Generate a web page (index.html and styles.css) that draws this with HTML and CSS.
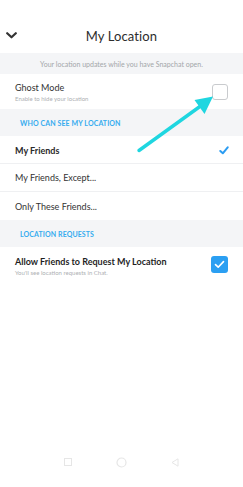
FILE: index.html
```html
<!DOCTYPE html>
<html>
<head>
<meta charset="utf-8">
<link rel="stylesheet" href="styles.css">
</head>
<body>
<div class="screen">
  <header class="header">
    <svg class="chev" width="11" height="7" viewBox="0 0 11 7"><path d="M1.2 1.2 L5.5 5.3 L9.8 1.2" fill="none" stroke="#333" stroke-width="2.2" stroke-linecap="round" stroke-linejoin="round"/></svg>
    <h1 class="title">My Location</h1>
  </header>
  <div class="info">Your location updates while you have Snapchat open.</div>
  <div class="row row-tall">
    <div class="texts">
      <div class="label">Ghost Mode</div>
      <div class="sub">Enable to hide your location</div>
    </div>
    <span class="box"></span>
  </div>
  <div class="section">WHO CAN SEE MY LOCATION</div>
  <div class="row opt first">
    <div class="label strong">My Friends</div>
    <svg class="tick" width="10" height="9" viewBox="0 0 10 9"><path d="M1.3 5 L3.8 7.3 L8.7 1.3" fill="none" stroke="#2b9cf2" stroke-width="2" stroke-linecap="round" stroke-linejoin="round"/></svg>
  </div>
  <div class="row opt">
    <div class="label">My Friends, Except...</div>
  </div>
  <div class="row opt noline">
    <div class="label">Only These Friends...</div>
  </div>
  <div class="section">LOCATION REQUESTS</div>
  <div class="row row-allow noline">
    <div class="texts">
      <div class="label bold">Allow Friends to Request My Location</div>
      <div class="sub">You'll see location requests in Chat.</div>
    </div>
    <span class="box on"><svg width="11" height="9" viewBox="0 0 11 9"><path d="M1.5 4.6 L4.2 7.2 L9.5 1.6" fill="none" stroke="#fff" stroke-width="1.6" stroke-linecap="round" stroke-linejoin="round"/></svg></span>
  </div>
  <div class="spacer"></div>
  <nav class="navbar">
    <svg width="8" height="8" viewBox="0 0 8 8"><rect x="0.5" y="0.5" width="7" height="7" fill="none" stroke="#e6e6e6"/></svg>
    <svg width="11" height="11" viewBox="0 0 11 11"><circle cx="5.5" cy="5.5" r="4.5" fill="none" stroke="#e6e6e6" stroke-width="1.2"/></svg>
    <svg width="8" height="9" viewBox="0 0 8 9"><path d="M7 0.8 L1 4.5 L7 8.2 Z" fill="none" stroke="#e6e6e6"/></svg>
  </nav>
  <svg class="arrow" width="243" height="487" viewBox="0 0 243 487">
    <path d="M139 150.5 L202 105" stroke="#1fd6e0" stroke-width="3.4" stroke-linecap="round"/>
    <path d="M213 96.5 L194.5 100 L204.5 114 Z" fill="#1fd6e0"/>
  </svg>
</div>
</body>
</html>
```
FILE: styles.css
```css
* { box-sizing: border-box; margin: 0; padding: 0; }
body { margin: 0; background: #fff; font-family: Lato, "Open Sans", sans-serif; color: #2b2b2b; }
.screen { position: relative; width: 243px; height: 487px; display: flex; flex-direction: column; overflow: hidden; }
.header { height: 53px; padding-top: 18px; display: flex; align-items: center; justify-content: center; position: relative; }
.chev { position: absolute; left: 6px; top: 32px; }
.title { font-size: 13px; font-weight: 400; color: #2d2d2d; letter-spacing: 0.1px; }
.info { height: 21px; background: #f4f5f7; font-size: 7px; color: #a3a6a9; display: flex; align-items: center; justify-content: center; }
.row { display: flex; align-items: center; justify-content: space-between; padding: 0 15px; border-bottom: 1px solid #eff0f2; }
.row-tall { height: 35px; padding-top: 1px; border-bottom: none; }
.opt { height: 28px; }
.opt.first { padding-top: 2px; }
.noline { border-bottom: none; }
.row-allow { height: 38px; align-items: flex-start; padding-top: 9px; }
.texts { display: flex; flex-direction: column; gap: 2px; }
.label { font-size: 9px; color: #333; }
.strong { font-weight: 700; color: #2a2a2a; }
.bold { font-weight: 700; font-size: 9px; color: #1f1f1f; }
.sub { font-size: 6px; color: #adb0b3; }
.section { height: 27px; background: #f4f5f7; color: #36acef; font-size: 7px; font-weight: 700; display: flex; align-items: center; padding-left: 20px; letter-spacing: 0.1px; }
.box { width: 16px; height: 16px; border: 1px solid #c9cbce; border-radius: 3px; display: flex; align-items: center; justify-content: center; }
.box.on { width: 17px; height: 17px; background: #2b9ff2; border: none; margin-top: 0; }
.tick { margin-right: -1px; }
.spacer { flex: 1; }
.navbar { height: 30px; display: flex; align-items: center; justify-content: center; gap: 44px; margin-bottom: 10px; }
.arrow { position: absolute; left: 0; top: 0; pointer-events: none; }
```
